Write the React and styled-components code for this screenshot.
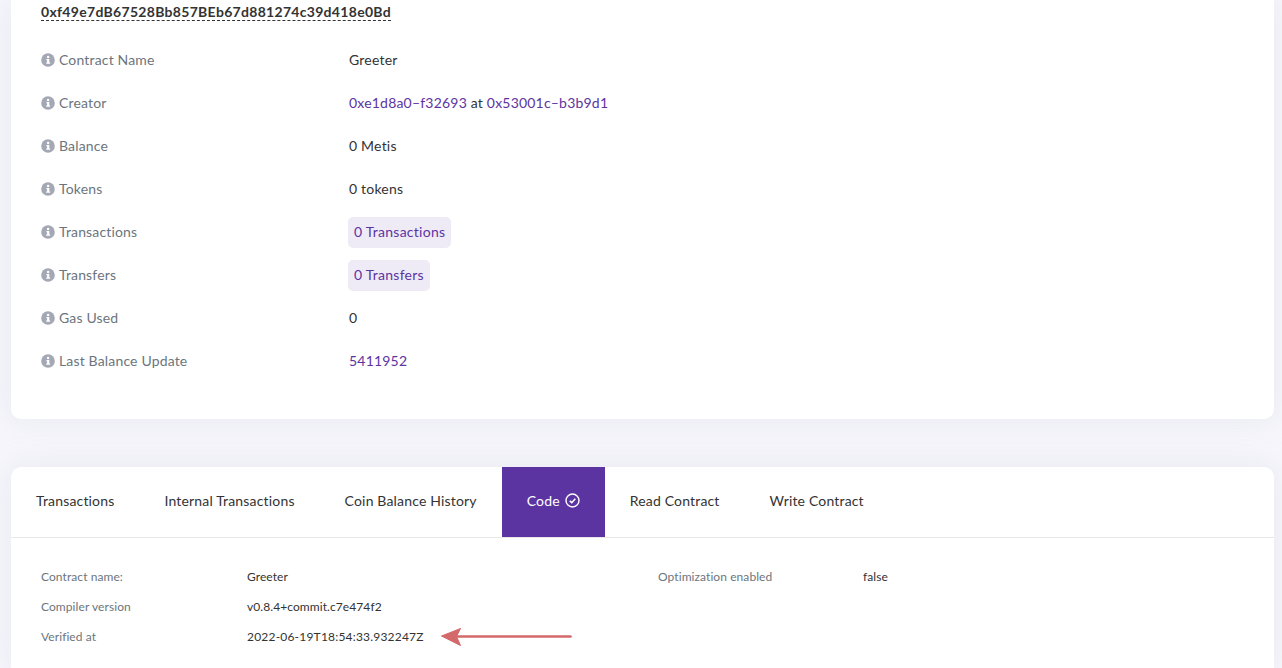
import React from 'react';
import styled, { createGlobalStyle } from 'styled-components';

const Global = createGlobalStyle`
  html, body { margin: 0; padding: 0; height: 668px; overflow: hidden; background: #f6f6fb; }
  body { font-family: Lato, "Noto Sans", sans-serif; font-size: 14px; color: #333; }
`;

const Page = styled.main`
  height: 668px;
  overflow: hidden;
  padding: 0 8px 0 11px;
  display: flex;
  flex-direction: column;
  gap: 48px;
`;

const Card = styled.section`
  background: #fff;
  border-radius: 10px;
  box-shadow: 0 0 30px rgba(202, 199, 226, 0.3);
`;

const SummaryCard = styled(Card)`
  height: 419px;
  border-radius: 0 0 10px 10px;
  padding: 0 30px;
  box-sizing: border-box;
`;

const Address = styled.h1`
  margin: 0;
  height: 38px;
  padding-top: 2px;
  box-sizing: border-box;
  font-size: 14px;
  line-height: 20px;
  font-weight: 700;
  letter-spacing: 0.3px;
  color: #333;
  & > span {
    text-decoration: underline dashed #333 1px;
    text-underline-offset: 3px;
  }
`;

const Rows = styled.dl`
  margin: 0;
  display: flex;
  flex-direction: column;
`;

const Row = styled.div`
  display: flex;
  align-items: center;
  height: 43px;
`;

const Label = styled.dt`
  width: 308px;
  display: flex;
  align-items: center;
  gap: 4px;
  color: #6c757d;
  letter-spacing: 0.16px;
`;

const Value = styled.dd`
  margin: 0;
  color: #333;
  letter-spacing: 0.2px;
`;

const Link = styled.a`
  color: #5c34a2;
`;

const Pill = styled.a`
  display: inline-block;
  margin-left: -1px;
  padding: 0 6px;
  height: 31px;
  line-height: 29px;
  border-radius: 5px;
  background: #efebf6;
  color: #5c34a2;
  letter-spacing: 0.26px;
  position: relative;
  top: 1px;
`;

const TabCard = styled(Card)`
  flex: 1;
  border-radius: 10px 10px 0 0;
`;

const TabBar = styled.nav`
  display: flex;
  height: 70px;
  border-bottom: 1px solid #e8e8e8;
`;

const Tab = styled.a`
  display: flex;
  align-items: center;
  gap: 5px;
  padding: 0 25px 4px;
  letter-spacing: 0.17px;
  color: ${p => (p.$active ? '#fff' : '#333')};
  background: ${p => (p.$active ? '#5c34a2' : 'transparent')};
  &:first-child { border-top-left-radius: 10px; }
`;

const Details = styled.div`
  padding: 24px 30px 0;
  display: grid;
  grid-template-columns: 206px 411px 205px 1fr;
  grid-template-rows: 29.5px 30px 30px;
  align-items: center;
  font-size: 12px;
  letter-spacing: 0.08px;
`;

const DetailLabel = styled.span`
  color: #6c757d;
`;

const DetailValue = styled.span`
  color: #333;
  display: flex;
  align-items: center;
  letter-spacing: ${p => (p.$numeric ? '0.2px' : 'inherit')};
`;

const Arrow = styled.svg`
  margin-left: 17px;
  flex: none;
`;

const InfoIcon = () => (
  <svg width="14" height="14" viewBox="0 0 14 14" aria-hidden="true">
    <circle cx="7" cy="7" r="6.8" fill="#a3a8b4" />
    <circle cx="7.1" cy="4" r="1.25" fill="#fff" />
    <path d="M5.4 6h2.9v3.6h.9v1.2H5.200V9.600h.9V7.200h-.7z" fill="#fff" />
  </svg>
);

const CheckIcon = () => (
  <svg width="15" height="15" viewBox="0 0 15 15" fill="none" stroke="#fff" aria-hidden="true">
    <circle cx="7.5" cy="7.5" r="6.5" strokeWidth="1.400" />
    <path d="M4.8 7.800l2 1.900 3.500-3.900" strokeWidth="1.600" />
  </svg>
);

const rows = [
  ['Contract Name', <Value>Greeter</Value>],
  ['Creator', <Value><Link>0xe1d8a0–f32693</Link> at <Link>0x53001c–b3b9d1</Link></Value>],
  ['Balance', <Value>0 Metis</Value>],
  ['Tokens', <Value>0 tokens</Value>],
  ['Transactions', <Value><Pill>0 Transactions</Pill></Value>],
  ['Transfers', <Value><Pill>0 Transfers</Pill></Value>],
  ['Gas Used', <Value>0</Value>],
  ['Last Balance Update', <Value><Link>5411952</Link></Value>],
];

const tabs = ['Transactions', 'Internal Transactions', 'Coin Balance History', 'Code', 'Read Contract', 'Write Contract'];

export default function App() {
  return (
    <>
      <Global />
      <Page>
        <SummaryCard>
          <Address><span>0xf49e7dB67528Bb857BEb67d881274c39d418e0Bd</span></Address>
          <Rows>
            {rows.map(([label, value]) => (
              <Row key={label}>
                <Label><InfoIcon />{label}</Label>
                {value}
              </Row>
            ))}
          </Rows>
        </SummaryCard>
        <TabCard>
          <TabBar>
            {tabs.map(t => (
              <Tab key={t} $active={t === 'Code'}>
                {t}{t === 'Code' && <CheckIcon />}
              </Tab>
            ))}
          </TabBar>
          <Details>
            <DetailLabel>Contract name:</DetailLabel>
            <DetailValue>Greeter</DetailValue>
            <DetailLabel>Optimization enabled</DetailLabel>
            <DetailValue>false</DetailValue>
            <DetailLabel>Compiler version</DetailLabel>
            <DetailValue>v0.8.4+commit.c7e474f2</DetailValue>
            <span /><span />
            <DetailLabel>Verified at</DetailLabel>
            <DetailValue $numeric>
              2022-06-19T18:54:33.932247Z
              <Arrow width="131" height="20" viewBox="0 0 131 20" aria-hidden="true">
                <path d="M16 9.500H129.500" stroke="#d4696b" strokeWidth="2.600" strokeLinecap="round" />
                <path d="M0.500 9L19.500 1.500L15.500 9.500L19.500 18.500z" fill="#d4696b" stroke="#d4696b" strokeWidth="1" strokeLinejoin="round" />
              </Arrow>
            </DetailValue>
          </Details>
        </TabCard>
      </Page>
    </>
  );
}
